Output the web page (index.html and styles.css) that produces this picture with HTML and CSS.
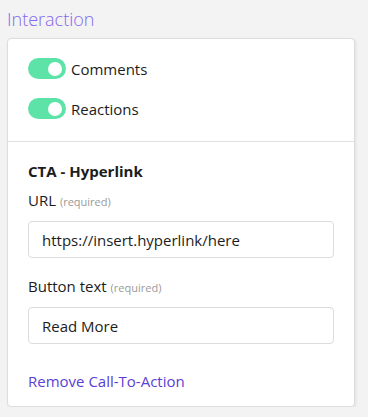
FILE: index.html
```html
<!DOCTYPE html>
<html>
<head>
<meta charset="utf-8">
<link rel="stylesheet" href="styles.css">
</head>
<body>
<h2 class="title">Interaction</h2>
<div class="card">
  <div class="section toggles">
    <label class="toggle-row"><span class="switch"><span class="knob"></span></span><span class="toggle-label">Comments</span></label>
    <label class="toggle-row"><span class="switch"><span class="knob"></span></span><span class="toggle-label">Reactions</span></label>
  </div>
  <div class="section cta">
    <div class="cta-title">CTA - Hyperlink</div>
    <div class="field-label">URL <span class="req">(required)</span></div>
    <div class="input">https://insert.hyperlink/here</div>
    <div class="field-label second">Button text <span class="req">(required)</span></div>
    <div class="input">Read More</div>
    <a class="remove" href="#">Remove Call-To-Action</a>
  </div>
</div>
</body>
</html>
```
FILE: styles.css
```css
html, body {
  margin: 0;
  padding: 0;
  background: #f3f3f3;
  font-family: "Open Sans", "Noto Sans", sans-serif;
  color: #1c1c1c;
}
.title {
  margin: 7px 0 7px 7px;
  font-size: 18px;
  font-weight: 300;
  line-height: 24px;
  color: #8469ee;
}
.card {
  margin: 0 13px 0 7px;
  background: #fff;
  border: 1px solid #dddddd;
  border-radius: 4px;
  box-shadow: 1px 1px 3px rgba(0,0,0,0.08);
}
.section {
  padding: 0 20px;
}
.toggles {
  padding-top: 19px;
  padding-bottom: 22px;
  display: flex;
  flex-direction: column;
  gap: 19px;
}
.toggle-row {
  display: flex;
  align-items: center;
  gap: 5px;
  height: 21px;
}
.switch {
  width: 38px;
  height: 21px;
  border-radius: 11px;
  background: #5de3a8;
  display: flex;
  align-items: center;
  justify-content: flex-end;
  padding-right: 4px;
  box-sizing: border-box;
}
.knob {
  width: 14px;
  height: 14px;
  border-radius: 50%;
  background: #fff;
}
.toggle-label {
  font-size: 15px;
  line-height: 20px;
}
.cta {
  border-top: 1px solid #e0e0e0;
  padding-top: 19px;
  padding-bottom: 15px;
  display: flex;
  flex-direction: column;
}
.cta-title {
  font-size: 15px;
  font-weight: 700;
  line-height: 20px;
  margin-bottom: 9px;
}
.field-label {
  font-size: 15px;
  line-height: 20px;
  margin-bottom: 9px;
}
.field-label.second {
  margin-top: 18px;
}
.req {
  font-size: 11px;
  color: #9a9a9a;
}
.input {
  height: 37px;
  box-sizing: border-box;
  border: 1px solid #dcdcdc;
  border-radius: 4px;
  padding: 0 13px;
  display: flex;
  align-items: center;
  font-size: 15px;
}
.remove {
  margin-top: 27px;
  font-size: 15px;
  line-height: 20px;
  color: #5a3ed6;
  text-decoration: none;
}
```
